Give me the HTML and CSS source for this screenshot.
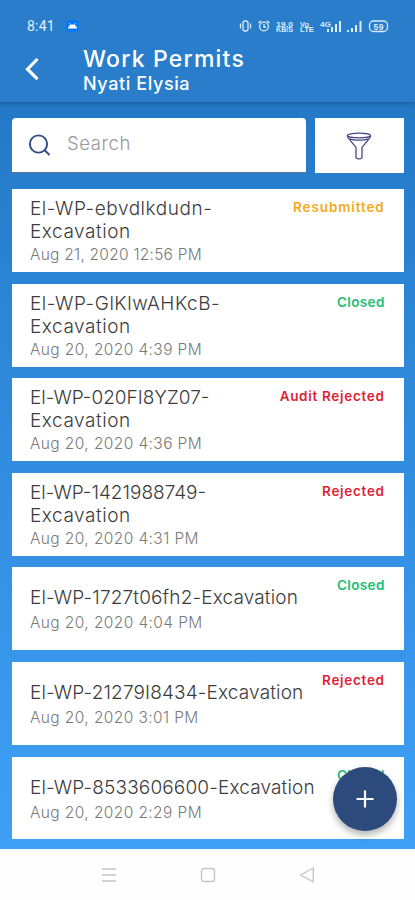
FILE: index.html
```
<!DOCTYPE html>
<html lang="en">
<head>
    <meta charset="UTF-8">
    <meta name="viewport" content="width=device-width, initial-scale=1.0">
    <title>Work Permits</title>
    <link rel="stylesheet" href="styles.css">
</head>
<body>
    <div class="app">
        <header class="header">
            <div class="statusBar">
                <span class="time">8:41</span>
                <svg class="android" width="13" height="12" viewBox="0 0 13 12">
                    <rect width="13" height="12" rx="4" fill="#0a78f5"/>
                    <path d="M2 8.600a4.500 4.200 0 0 1 9 0z" fill="#fff"/>
                    <path d="M3.300 3l1.500 2M9.700 3L8.200 5" stroke="#fff" stroke-width=".7"/>
                </svg>
                <svg class="statusIcons" width="152" height="16" viewBox="0 0 152 16" fill="none" stroke="#d9ecfb" stroke-width="1.300">
                    <rect x="4" y="3" width="5" height="10" rx="2"/>
                    <path d="M1.500 5.500v5M11.500 5.500v5"/>
                    <circle cx="25" cy="8.500" r="4.400"/>
                    <path d="M25 6v3h2M19.500 5l2.500-2.200M30.500 5L28 2.800"/>
                    <g class="tiny">
                        <text x="37" y="8.500" textLength="17" lengthAdjust="spacingAndGlyphs">19.0</text>
                        <text x="37" y="14" textLength="17" lengthAdjust="spacingAndGlyphs">KB/S</text>
                        <text x="61" y="8.500" textLength="9" lengthAdjust="spacingAndGlyphs">Vo</text>
                        <text x="61" y="14" textLength="14" lengthAdjust="spacingAndGlyphs">LTE</text>
                        <text x="81" y="8.500" textLength="11" lengthAdjust="spacingAndGlyphs">4G</text>
                    </g>
                    <path d="M89 14v-3M93 14V9M97 14V6M101 14V3M109 14v-2M113 14v-4M117 14V7M121.500 14V3" stroke-width="2"/>
                    <rect x="130.500" y="3" width="18" height="10.500" rx="4"/>
                    <text class="battery" x="134.500" y="11.500" textLength="10">59</text>
                </svg>
            </div>
            <div class="titleBar">
                <svg class="back" width="16" height="24" viewBox="0 0 16 24">
                    <path d="M13.500 2L3.500 12.200l10 10" fill="none" stroke="#fff" stroke-width="3.200"/>
                </svg>
                <div>
                    <h1 class="title">Work Permits</h1>
                    <div class="subtitle">Nyati Elysia</div>
                </div>
            </div>
        </header>

        <main class="content">
            <div class="tools">
                <div class="searchBox">
                    <svg width="24" height="24" viewBox="0 0 24 24" fill="none" stroke="#2e4c86" stroke-width="1.900">
                        <circle cx="10.500" cy="11" r="8.600"/>
                        <path d="M16.500 17l5 5"/>
                    </svg>
                    <span class="placeholder">Search</span>
                </div>
                <div class="filterBox">
                    <svg width="26" height="28" viewBox="0 0 26 28" fill="none" stroke="#454b80" stroke-width="1.300" stroke-linejoin="round">
                        <ellipse cx="13" cy="3.500" rx="11.600" ry="2.300"/>
                        <path d="M1.400 3.800c0 1.500 1 2.500 2 3.500l6.600 8v10c0 2 6 2 6 0v-10l6.600-8c1-1 2-2 2-3.500M3.800 6.800c4 1.800 14.400 1.800 18.400 0"/>
                    </svg>
                </div>
            </div>

            <div class="permits">
                <div class="permit">
                    <div class="info">
                        <div class="name">El-WP-ebvdlkdudn-<br>Excavation</div>
                        <div class="date long">Aug 21, 2020 12:56 PM</div>
                    </div>
                    <div class="status resubmitted">Resubmitted</div>
                </div>
                <div class="permit">
                    <div class="info">
                        <div class="name">El-WP-GlKlwAHKcB-<br>Excavation</div>
                        <div class="date">Aug 20, 2020 4:39 PM</div>
                    </div>
                    <div class="status closed">Closed</div>
                </div>
                <div class="permit">
                    <div class="info">
                        <div class="name"><span class="digits">El-WP-020FI8YZ07-</span><br>Excavation</div>
                        <div class="date">Aug 20, 2020 4:36 PM</div>
                    </div>
                    <div class="status rejected">Audit Rejected</div>
                </div>
                <div class="permit">
                    <div class="info">
                        <div class="name"><span class="digits">El-WP-1421988749-</span><br>Excavation</div>
                        <div class="date">Aug 20, 2020 4:31 PM</div>
                    </div>
                    <div class="status rejected">Rejected</div>
                </div>
                <div class="permit single">
                    <div class="info">
                        <div class="name">El-WP-1727t06fh2-Excavation</div>
                        <div class="date">Aug 20, 2020 4:04 PM</div>
                    </div>
                    <div class="status closed">Closed</div>
                </div>
                <div class="permit single">
                    <div class="info">
                        <div class="name">El-WP-21279I8434-Excavation</div>
                        <div class="date">Aug 20, 2020 3:01 PM</div>
                    </div>
                    <div class="status rejected">Rejected</div>
                </div>
                <div class="permit single">
                    <div class="info">
                        <div class="name">El-WP-8533606600-Excavation</div>
                        <div class="date">Aug 20, 2020 2:29 PM</div>
                    </div>
                    <div class="status closed">Closed</div>
                </div>
            </div>
            <div class="addBtn">
                <svg width="18" height="18" viewBox="0 0 18 18">
                    <path d="M9 .5v17M.5 9h17" stroke="#fff" stroke-width="2.200"/>
                </svg>
            </div>
        </main>

        <nav class="navBar">
            <svg width="16" height="16" viewBox="0 0 16 16"><path d="M1 2h14M1 8h14M1 14h14"/></svg>
            <svg width="16" height="16" viewBox="0 0 16 16"><rect x="1.500" y="1.500" width="13" height="13" rx="2.500"/></svg>
            <svg width="16" height="16" viewBox="0 0 16 16"><path d="M14.300 1v14L1.500 8z" stroke-linejoin="round"/></svg>
        </nav>
    </div>
</body>
</html>
```
FILE: styles.css
```
*{
    margin: 0;
    padding: 0;
    box-sizing: border-box;
}
body{
    font-family: Inter, "Open Sans", sans-serif;
}
.app{
    height: 900px;
    display: flex;
    flex-direction: column;
    overflow: hidden;
}
.header{
    height: 102px;
    background: #297dca;
    color: #fff;
    padding-top: 18px;
    box-shadow: 0 1px 5px rgba(0, 30, 70, .4);
    z-index: 1;
}
.statusBar{
    height: 16px;
    display: flex;
    align-items: center;
    padding: 0 24px 0 27px;
}
.time{
    width: 39px;
    font: 14px Roboto, sans-serif;
    letter-spacing: .2px;
    color: #e0f0fc;
}
.statusIcons{
    margin-left: auto;
}
.tiny, .battery{
    font: bold 7px "Liberation Sans", sans-serif;
    fill: #d9ecfb;
    stroke: none;
}
.battery{
    font-size: 8.5px;
}
.titleBar{
    display: flex;
    padding: 10px 0 0 24px;
}
.back{
    width: 16px;
    margin: 13px 43px 0 0;
}
.title{
    font-size: 23px;
    font-weight: 450;
    line-height: 30px;
    letter-spacing: 1.2px;
}
.subtitle{
    font-size: 18px;
    font-weight: 450;
    line-height: 20px;
    letter-spacing: .6px;
}
.content{
    height: 747px;
    background: linear-gradient(#2479c5, #2c86d8 30%, #3fa0f5);
    padding: 16px 11px 0 12px;
    position: relative;
}
.tools{
    display: flex;
    gap: 9px;
    margin-bottom: 16px;
}
.searchBox{
    width: 294px;
    height: 55px;
    background: #fff;
    border-bottom: 1px solid #5d7890;
    border-radius: 4px 4px 0 0;
    display: flex;
    align-items: center;
    padding-left: 16px;
}
.placeholder{
    margin: -5px 0 0 15px;
    font-size: 18.5px;
    font-weight: 300;
    letter-spacing: .6px;
    color: #999;
}
.filterBox{
    flex: 1;
    height: 55px;
    background: #fff;
    display: flex;
    align-items: center;
    justify-content: center;
    padding-right: 2px;
}
.permits{
    display: flex;
    flex-direction: column;
    gap: 11.6px;
}
.permit{
    height: 83px;
    background: #fff;
    padding: 8px 20px 0 18px;
    display: flex;
    justify-content: space-between;
}
.permit:last-child{
    height: 82px;
}
.single .info{
    padding-top: 11px;
}
.name{
    font-size: 19px;
    font-weight: 300;
    line-height: 23px;
    letter-spacing: .55px;
    color: #3c3c3c;
    white-space: nowrap;
}
.digits{
    letter-spacing: 0;
}
.single .name{
    letter-spacing: .15px;
}
.date{
    font-size: 15.5px;
    font-weight: 300;
    line-height: 23px;
    letter-spacing: .4px;
    color: #7a7a7a;
    white-space: nowrap;
}
.long{
    letter-spacing: .25px;
}
.single .date{
    padding-top: 2px;
}
.status{
    font-size: 13.5px;
    font-weight: 600;
    line-height: 21px;
    letter-spacing: .7px;
    margin-right: -.7px;
    white-space: nowrap;
}
.resubmitted{
    color: #f5aa20;
    letter-spacing: .9px;
}
.closed{
    color: #20bd75;
    letter-spacing: .35px;
}
.rejected{
    color: #e01f36;
}
.addBtn{
    position: absolute;
    right: 18px;
    bottom: 18px;
    width: 64px;
    height: 64px;
    border-radius: 50%;
    background: #2d4a7c;
    box-shadow: 0 4px 7px rgba(0, 0, 0, .3);
    display: flex;
    align-items: center;
    justify-content: center;
}
.navBar{
    height: 51px;
    background: #fefefe;
    display: flex;
    justify-content: center;
    gap: 83px;
    padding-top: 18px;
}
.navBar svg{
    fill: none;
    stroke: #c5c5c5;
    stroke-width: 1.4;
}
```
